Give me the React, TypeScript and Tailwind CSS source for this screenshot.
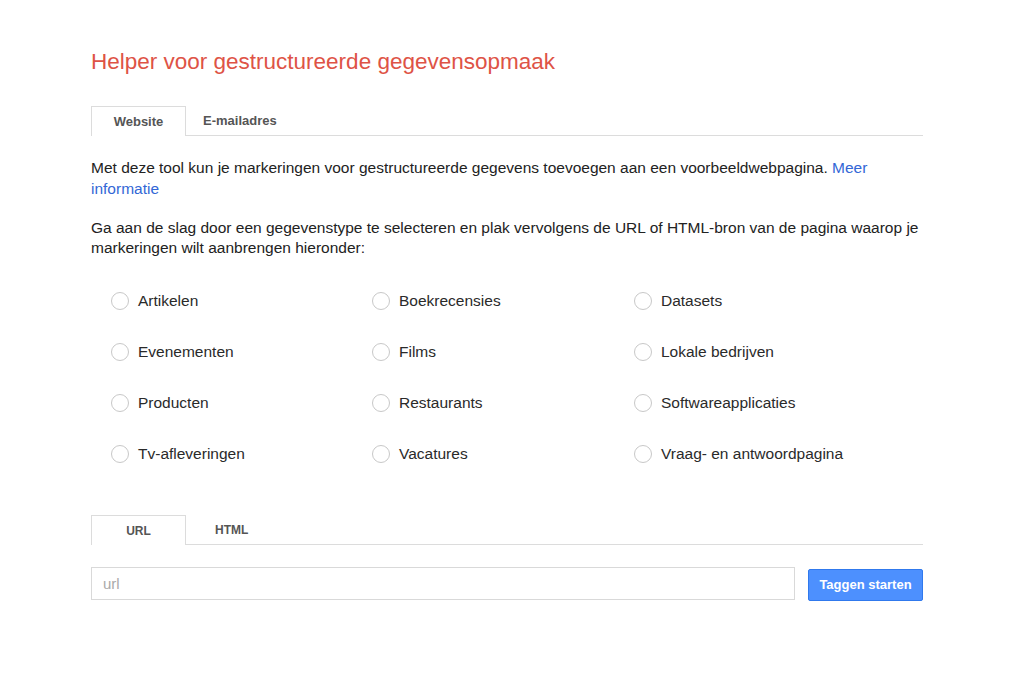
import React from "react";

const types = [
  "Artikelen",
  "Boekrecensies",
  "Datasets",
  "Evenementen",
  "Films",
  "Lokale bedrijven",
  "Producten",
  "Restaurants",
  "Softwareapplicaties",
  "Tv-afleveringen",
  "Vacatures",
  "Vraag- en antwoordpagina",
];

function Tabs({ items, small }: { items: string[]; small?: boolean }) {
  const text = small ? "text-[12px]" : "text-[13px]";
  return (
    <div className="flex h-[30px] border-b border-[#dcdcdc]">
      <div
        className={`-mb-px flex w-[95px] items-center justify-center border border-b-0 border-[#dcdcdc] bg-white font-bold text-[#555] ${text}`}
      >
        {items[0]}
      </div>
      <div className={`flex items-center font-bold text-[#555] ${small ? "pl-[29px]" : "pl-[17px]"} ${text}`}>
        {items[1]}
      </div>
    </div>
  );
}

export default function App() {
  return (
    <div className="min-h-[683px] bg-white font-['Liberation_Sans',Arial,sans-serif] text-[#222]">
      <div className="ml-[91px] w-[832px] pt-[47px]">
        <h1 className="text-[22.5px] leading-[30px] text-[#de5346]">
          Helper voor gestructureerde gegevensopmaak
        </h1>

        <div className="mt-[29px]">
          <Tabs items={["Website", "E-mailadres"]} />
        </div>

        <p className="mt-[21px] text-[15.5px] leading-[21px]">
          Met deze tool kun je markeringen voor gestructureerde gegevens toevoegen aan een
          voorbeeldwebpagina. <a href="#" className="text-[#3367d6]">Meer</a>
          <br />
          <a href="#" className="text-[#3367d6]">informatie</a>
        </p>
        <p className="mt-[19px] text-[15.5px] leading-[20px]">
          Ga aan de slag door een gegevenstype te selecteren en plak vervolgens de URL of
          HTML-bron van de pagina waarop je markeringen wilt aanbrengen hieronder:
        </p>

        <div className="mt-[17px] grid grid-cols-[261px_262px_1fr] pl-[20px]">
          {types.map((t) => (
            <label key={t} className="flex h-[51px] items-center gap-[9px] text-[15.5px] text-[#2a2a2a]">
              <span className="h-[18px] w-[18px] shrink-0 rounded-full border border-[#c8c8c8] bg-white" />
              <span>{t}</span>
            </label>
          ))}
        </div>

        <div className="mt-[36px]">
          <Tabs items={["URL", "HTML"]} small />
        </div>

        <div className="mt-[22px] flex items-start gap-[13px]">
          <input
            placeholder="url"
            className="h-[33px] flex-1 border border-[#d9d9d9] px-[11px] text-[15px] text-[#222] outline-none placeholder:text-[#aaa]"
          />
          <button className="mt-[2px] h-[32px] w-[115px] rounded-[2px] border border-[#3079ed] bg-[#4d90fe] text-[13px] font-bold text-white">
            Taggen starten
          </button>
        </div>
      </div>
    </div>
  );
}
